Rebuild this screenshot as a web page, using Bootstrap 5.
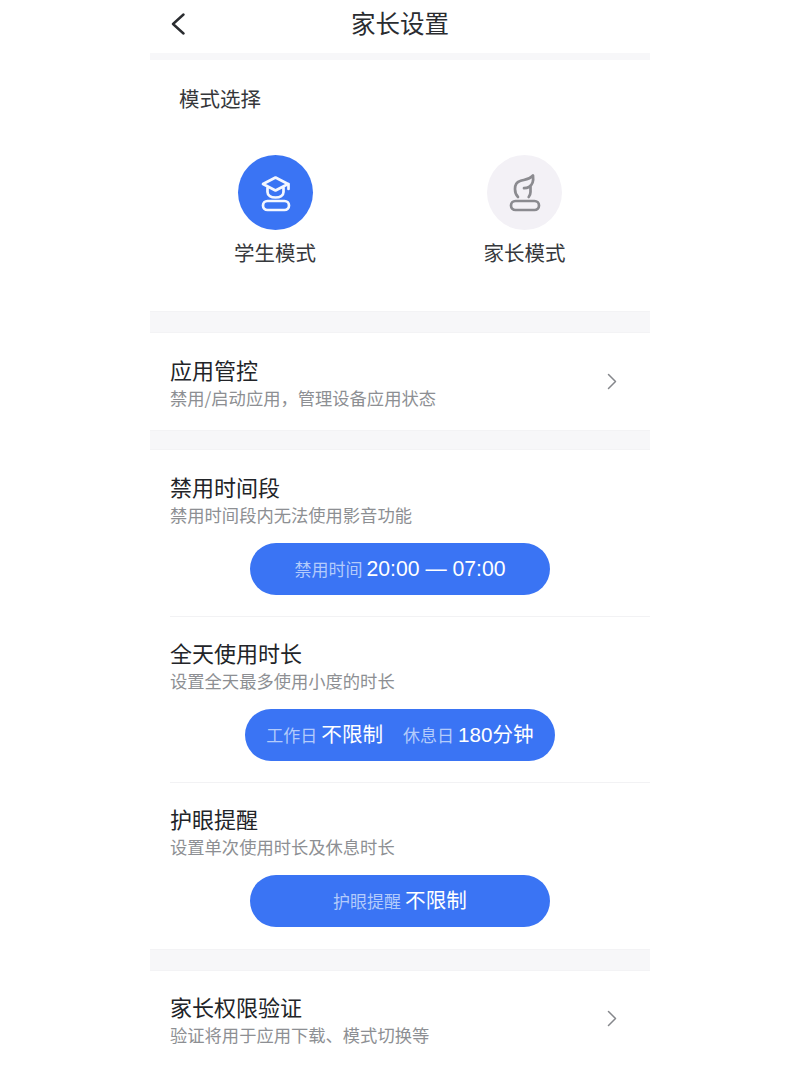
<!DOCTYPE html>
<html lang="zh-CN">
<head>
<meta charset="utf-8">
<title>家长设置</title>
<link href="https://cdn.jsdelivr.net/npm/bootstrap@5.3.0/dist/css/bootstrap.min.css" rel="stylesheet">
<style>
body{font-family:"Liberation Sans","Noto Sans CJK SC",sans-serif;background:#fff;color:#26282c;overflow:hidden}
.cjk{font-family:"Noto Sans CJK SC",sans-serif}
.screen{width:500px;height:1067px;overflow:hidden}
.topbar{height:53px;padding-left:21px}
.topbar-title{font-size:24.5px;line-height:40px;color:#2a2c30;flex:1;text-align:center;padding-right:56px;margin-bottom:8px}
.back{width:14px;height:22px;margin-right:21px;margin-top:-6px}
.band{background:#f7f7f9}
.b7{height:7px}
.b22{height:22px;border-top:1px solid #f3f3f5;border-bottom:1px solid #f3f3f5}
.b20{height:20px;border-top:1px solid #f3f3f5;border-bottom:1px solid #f3f3f5}
.mode-sec{height:251px;padding-top:23px}
.mode-head{font-size:20.5px;line-height:30px;padding-left:29px;color:#35373b}
.mode-row{margin-top:42px}
.mode-col{width:250px}
.mode-col-alt{width:249px}
.disc{width:75px;height:75px}
.disc-on{background:#3a74f4}
.disc-off{background:#f3f1f6}
.mode-label{font-size:20.5px;line-height:30px;margin-top:7px;color:#36383c}
.link-row{padding:23px 0 18px 20px}
.link-last{padding-top:22px}
.ttl{font-size:22px;line-height:26px;padding-bottom:4px;color:#222428}
.sub{font-size:17.3px;line-height:24px;padding-bottom:2px;color:#8d8f93}
.chev{width:10px;height:17px;margin-right:33px;margin-top:-6px}
.setting{margin-left:20px;padding:22px 0 21px}
.setting-first{padding-top:23px}
.setting-end{padding-bottom:22px}
.setting-line{border-bottom:1px solid #f2f2f4}
.pill-wrap{margin-top:14px;margin-left:-20px}
.act{background:#3a74f4;height:52px;color:#fff;width:300px;border:0}
.act-wide{width:310px}
.act-k{font-size:17px;color:#b3cbfb}
.act-v{font-family:"Liberation Sans","Noto Sans CJK SC",sans-serif;font-size:20.6px;color:#fff}
.act-time{font-size:21.2px}
.gap-small{margin-left:4px}
.gap-big{margin-left:20px}
</style>
</head>
<body>
<div class="screen mx-auto cjk">
  <header class="topbar d-flex align-items-center">
    <svg class="back flex-shrink-0" viewBox="0 0 14 22" fill="none" stroke="#2a2c30" stroke-width="2.4" stroke-linecap="round" stroke-linejoin="round"><path d="M12.5 1.5 2 11l10.500 9.500"/></svg>
    <div class="topbar-title">家长设置</div>
  </header>
  <div class="band b7"></div>

  <section class="mode-sec">
    <div class="mode-head">模式选择</div>
    <div class="mode-row d-flex">
      <div class="mode-col d-flex flex-column align-items-center">
        <div class="disc disc-on rounded-circle">
          <svg width="75" height="75" viewBox="0 0 75 75" fill="none" stroke="#f4f7ff" stroke-width="2.7" stroke-linecap="round" stroke-linejoin="round">
            <path d="M25 29 37.500 22.500 50 29 37.500 35.500Z"/>
            <path d="M50.500 29v5"/>
            <path d="M29.500 33v4c0 3.500 3.500 5.500 8 5.500s8-2 8-5.500v-4"/>
            <rect x="25" y="46" width="26" height="9" rx="4.500"/>
          </svg>
        </div>
        <div class="mode-label">学生模式</div>
      </div>
      <div class="mode-col-alt d-flex flex-column align-items-center">
        <div class="disc disc-off rounded-circle">
          <svg width="75" height="75" viewBox="0 0 75 75" fill="none" stroke="#8b8b90" stroke-width="2.7" stroke-linecap="round" stroke-linejoin="round">
            <path d="M31 42c-2-2-3-5-3-8 0-4 2-7 5-8 4-1.500 9-1 13-5.500 .6 4.500-.500 9.500-4 11.500-1.700 1-3.500 1.200-5 1.200"/>
            <path d="M43.500 32v5c0 2-.6 3.500-1.800 5"/>
            <rect x="24" y="46" width="28" height="9" rx="4.500"/>
          </svg>
        </div>
        <div class="mode-label">家长模式</div>
      </div>
    </div>
  </section>

  <div class="band b22"></div>

  <section class="link-row d-flex align-items-center justify-content-between">
    <div>
      <div class="ttl">应用管控</div>
      <div class="sub">禁用/启动应用，管理设备应用状态</div>
    </div>
    <svg class="chev flex-shrink-0" viewBox="0 0 10 17" fill="none" stroke="#85878b" stroke-width="1.500" stroke-linecap="round" stroke-linejoin="round"><path d="M1.500 1.500 8.500 8.500 1.500 15.500"/></svg>
  </section>

  <div class="band b20"></div>

  <section>
    <div class="setting setting-first setting-line">
      <div class="ttl">禁用时间段</div>
      <div class="sub">禁用时间段内无法使用影音功能</div>
      <div class="pill-wrap d-flex justify-content-center">
        <div class="act rounded-pill d-flex align-items-center justify-content-center">
          <span class="act-k">禁用时间</span><span class="act-v act-time gap-small">20:00 — 07:00</span>
        </div>
      </div>
    </div>
    <div class="setting setting-line">
      <div class="ttl">全天使用时长</div>
      <div class="sub">设置全天最多使用小度的时长</div>
      <div class="pill-wrap d-flex justify-content-center">
        <div class="act act-wide rounded-pill d-flex align-items-center justify-content-center">
          <span class="act-k">工作日</span><span class="act-v gap-small">不限制</span>
          <span class="act-k gap-big">休息日</span><span class="act-v gap-small">180分钟</span>
        </div>
      </div>
    </div>
    <div class="setting setting-end">
      <div class="ttl">护眼提醒</div>
      <div class="sub">设置单次使用时长及休息时长</div>
      <div class="pill-wrap d-flex justify-content-center">
        <div class="act rounded-pill d-flex align-items-center justify-content-center">
          <span class="act-k">护眼提醒</span><span class="act-v gap-small">不限制</span>
        </div>
      </div>
    </div>
  </section>

  <div class="band b22"></div>

  <section class="link-row link-last d-flex align-items-center justify-content-between">
    <div>
      <div class="ttl">家长权限验证</div>
      <div class="sub">验证将用于应用下载、模式切换等</div>
    </div>
    <svg class="chev flex-shrink-0" viewBox="0 0 10 17" fill="none" stroke="#85878b" stroke-width="1.500" stroke-linecap="round" stroke-linejoin="round"><path d="M1.500 1.500 8.500 8.500 1.500 15.500"/></svg>
  </section>
</div>
<script src="https://cdn.jsdelivr.net/npm/bootstrap@5.3.0/dist/js/bootstrap.bundle.min.js"></script>
</body>
</html>
